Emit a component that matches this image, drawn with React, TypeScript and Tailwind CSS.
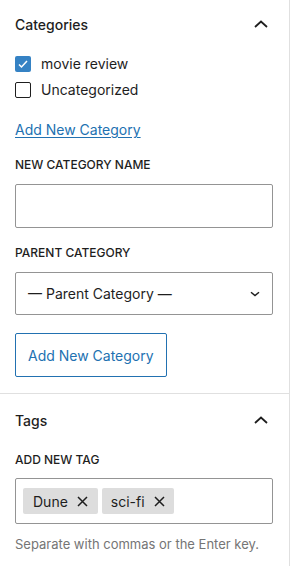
import React from "react";

const ChevronUp = () => (
  <svg width="14" height="8" viewBox="0 0 14 8" className="block">
    <path d="M1 7 7 1.5 13 7" fill="none" stroke="#1e1e1e" strokeWidth="1.8" />
  </svg>
);

const ChevronDown = () => (
  <svg width="10" height="6" viewBox="0 0 10 6" className="block">
    <path d="M1 1.2 5 4.6 9 1.2" fill="none" stroke="#1e1e1e" strokeWidth="1.5" />
  </svg>
);

const X = () => (
  <svg width="11" height="11" viewBox="0 0 11 11" className="block">
    <path d="M1 1l9 9M10 1l-9 9" stroke="#1e1e1e" strokeWidth="1.5" />
  </svg>
);

export default function App() {
  return (
    <div
      className="w-[293px] h-[566px] bg-white text-[#1e1e1e]"
      style={{ fontFamily: "Inter, 'Noto Sans', sans-serif" }}
    >
      <div className="w-[290px] h-full border-r border-[#e0e0e0]">
        <div className="pl-[15px] pr-[16px] pt-[12px] pb-[16px] border-b border-[#e0e0e0]">
          <div className="flex items-center justify-between h-[24px]">
            <span className="text-[14px] font-medium">Categories</span>
            <span className="mr-[5px]">
              <ChevronUp />
            </span>
          </div>
          <div className="mt-[20px] flex flex-col gap-[10px]">
            <label className="flex items-center gap-[10px] h-[16px]">
              <span className="w-[16px] h-[16px] rounded-[2px] bg-[#3582c4] flex items-center justify-center">
                <svg width="12" height="12" viewBox="0 0 12 12">
                  <path d="M2 6.5l2.5 2.5L10 3" fill="none" stroke="white" strokeWidth="1.5" />
                </svg>
              </span>
              <span className="text-[14px] leading-[16px]">movie review</span>
            </label>
            <label className="flex items-center gap-[10px] h-[16px]">
              <span className="w-[16px] h-[16px] rounded-[2px] border border-[#1e1e1e] bg-white" />
              <span className="text-[14px] leading-[16px]">Uncategorized</span>
            </label>
          </div>
          <div className="mt-[22px] text-[14px] leading-[20px] text-[#2271b1] underline underline-offset-2">
            Add New Category
          </div>
          <div className="mt-[17px] text-[12px] leading-[16px] font-medium uppercase">New category name</div>
          <div className="mt-[11px] h-[44px] border border-[#949494] rounded-[2px]" />
          <div className="mt-[17px] text-[12px] leading-[16px] font-medium uppercase">Parent category</div>
          <div className="mt-[11px] h-[43px] border border-[#949494] rounded-[2px] flex items-center justify-between pl-[12px] pr-[12px]">
            <span className="text-[14px]">— Parent Category —</span>
            <ChevronDown />
          </div>
          <div className="mt-[18px] flex">
            <div className="flex items-center h-[44px] px-[12px] border border-[#2271b1] rounded-[2px] text-[14px] text-[#2271b1]">
              Add New Category
            </div>
          </div>
        </div>
        <div className="pl-[15px] pr-[16px] pt-[14px]">
          <div className="flex items-center justify-between h-[24px]">
            <span className="text-[14px] font-medium">Tags</span>
            <span className="mr-[5px]">
              <ChevronUp />
            </span>
          </div>
          <div className="mt-[20px] text-[12px] leading-[16px] font-medium uppercase">Add new tag</div>
          <div className="mt-[10px] h-[46px] border border-[#949494] rounded-[2px] flex items-center gap-[4px] px-[7px]">
            <span className="h-[26px] bg-[#dddddd] rounded-[2px] flex items-center gap-[9px] pl-[10px] pr-[10px] text-[14px]">
              Dune <X />
            </span>
            <span className="h-[26px] bg-[#dddddd] rounded-[2px] flex items-center gap-[9px] pl-[9px] pr-[9px] text-[14px]">
              sci-fi <X />
            </span>
          </div>
          <div className="mt-[11px] text-[13px] leading-[18px] text-[#757575]">
            Separate with commas or the Enter key.
          </div>
        </div>
      </div>
    </div>
  );
}
